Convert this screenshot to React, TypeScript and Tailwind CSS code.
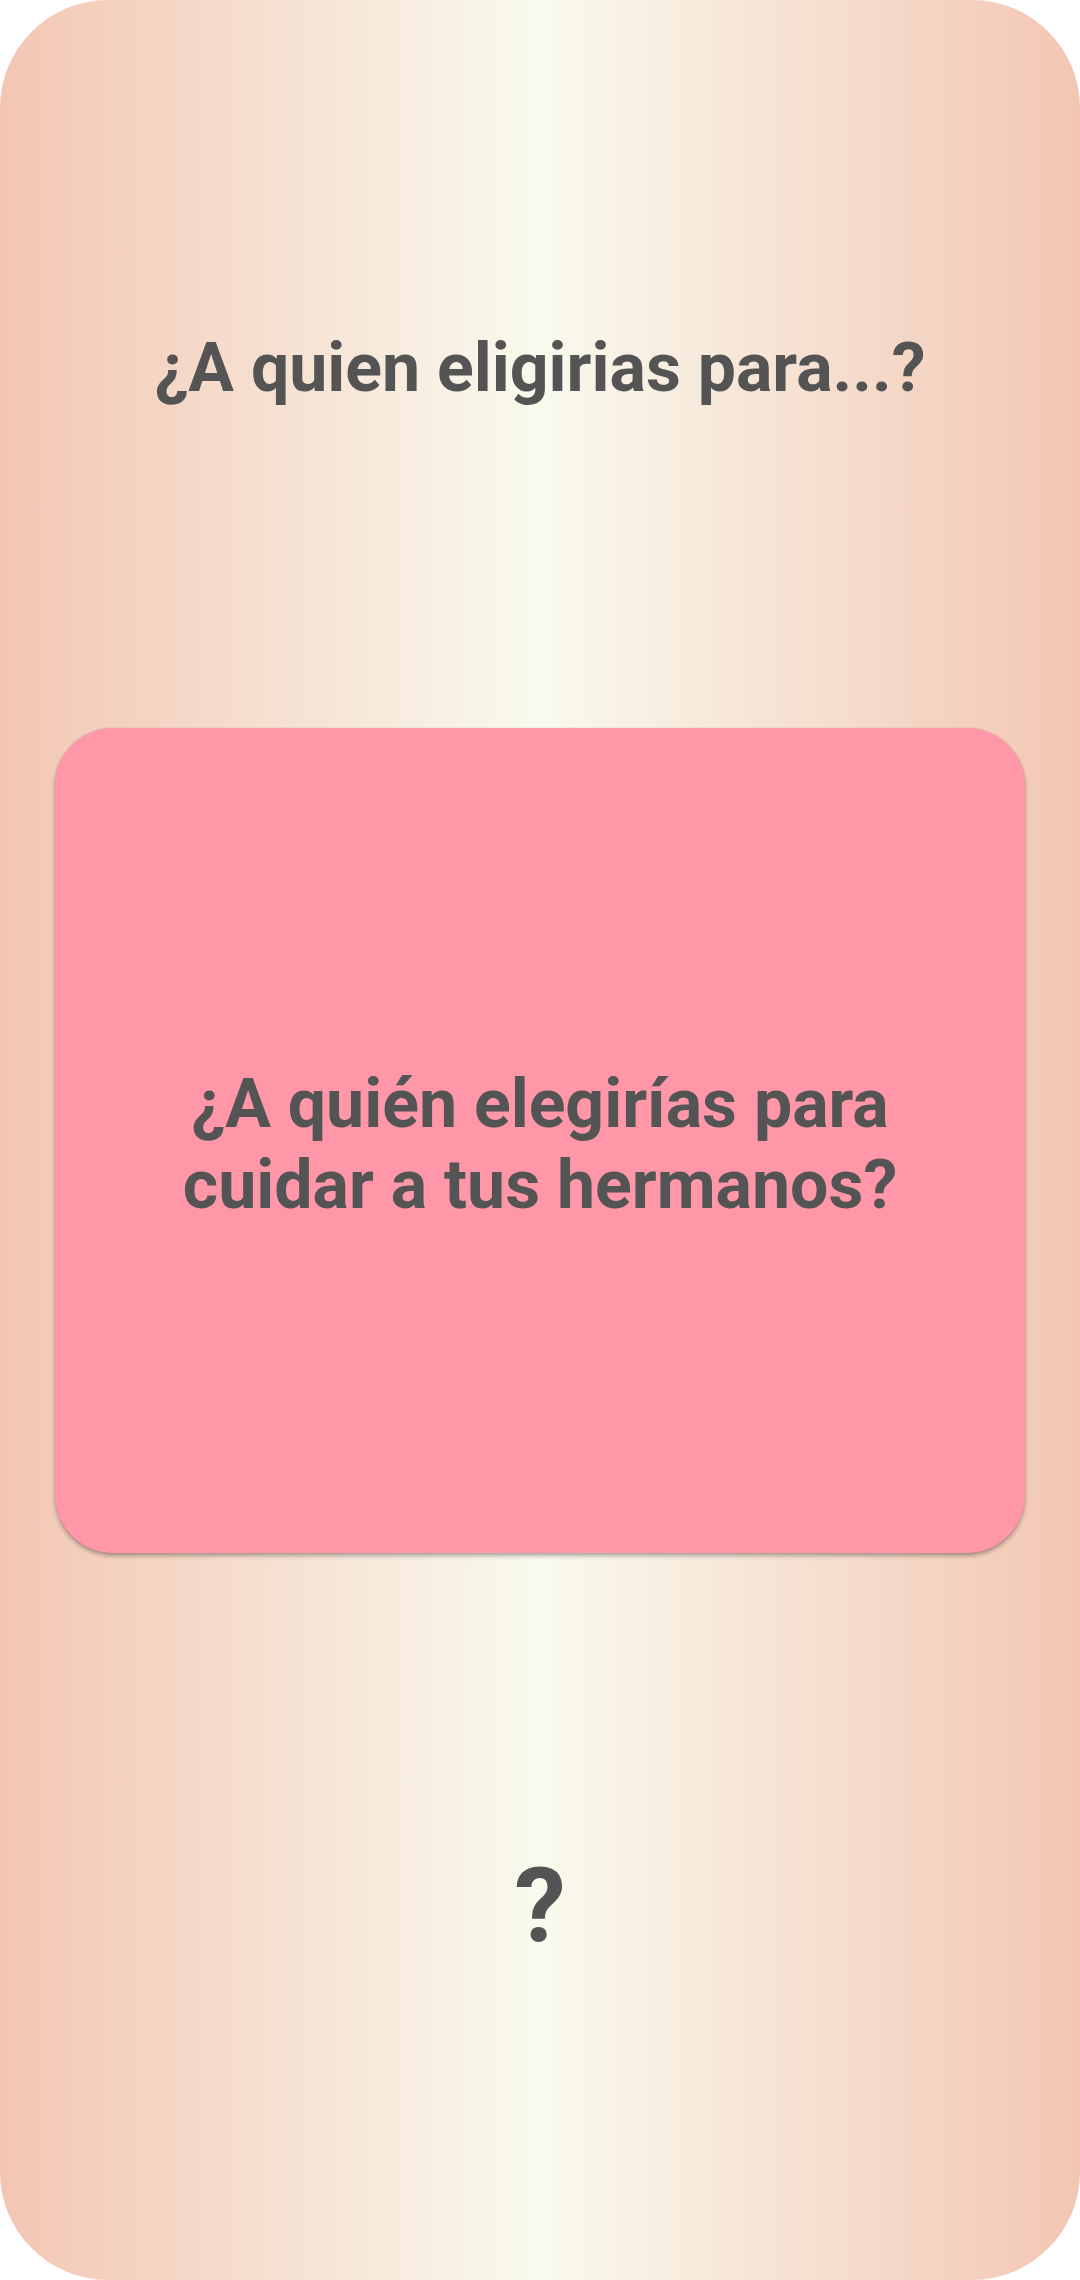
export default function App() {
  return (
    <div className="w-[1080px] h-[2280px] bg-white" style={{ fontFamily: 'Roboto, "Liberation Sans", sans-serif' }}>
      <div className="w-full h-full rounded-[108px] bg-[linear-gradient(to_right,#f3c6b3_0%,#f9faee_50%,#f3c6b3_100%)] flex flex-col items-center">
        {/* Header */}
        <h1 className="mt-[328px] text-[68px] leading-[80px] font-bold text-[#545454] text-center">
          ¿A quien eligirias para...?
        </h1>

        {/* Question card */}
        <div className="mt-[320px] w-[970px] h-[825px] rounded-[58px] bg-[#ff97a8] shadow-[0_3px_4px_rgba(0,0,0,0.3),0_0_2px_rgba(0,0,0,0.12)] flex items-center justify-center px-[100px] pt-2">
          <p className="text-[68px] leading-[81px] font-bold text-[#545454] text-center">
            ¿A quién elegirías para cuidar a tus hermanos?
          </p>
        </div>

        {/* Reveal */}
        <span className="mt-[292px] text-[103px] leading-[121px] font-bold text-[#545454]">?</span>
      </div>
    </div>
  );
}
